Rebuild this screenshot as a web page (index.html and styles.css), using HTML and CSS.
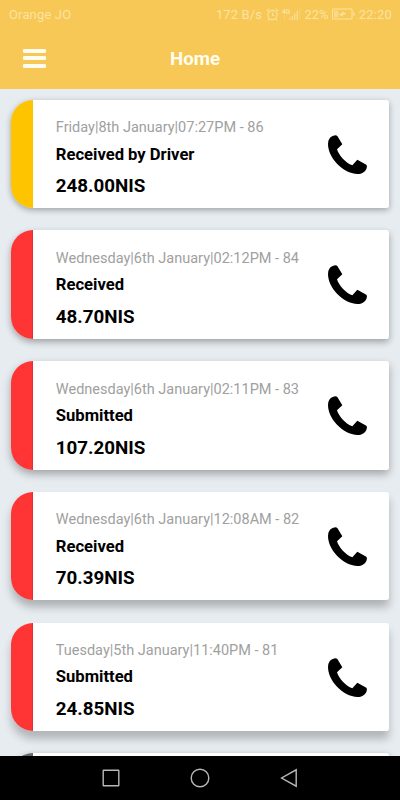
FILE: index.html
```
<!DOCTYPE html>
<html lang="en">

<head>
    <meta charset="UTF-8">
    <meta name="viewport" content="width=device-width, initial-scale=1.0">
    <title>Home</title>
    <link rel="stylesheet" href="styles.css">
</head>

<body>
    <svg class="symbols">
        <symbol id="phone" viewBox="0 0 117 117">
            <path d="M14 3Q24 -1 28 3L43 28L27 43C33 62 53 84 73 91L88 74L115 89Q118 92 116 99C112 112 101 117 89 117C43 115 0 67 0 27C0 14 6 6 14 3Z" />
        </symbol>
    </svg>

    <header>
        <div class="status">
            <span class="carrier">Orange JO</span>
            <span class="speed">172 B/s</span>
            <svg class="alarm" width="13" height="13" viewBox="0 0 13 13">
                <circle cx="6.5" cy="7" r="4.6" />
                <path d="M6.5 4.5V7.2L8.5 8M.8 3.2L3.2 1M12.2 3.2L9.8 1M3 11L2 12.3M10 11L11 12.3" />
            </svg>
            <svg class="signal" width="19" height="13" viewBox="0 0 19 13">
                <text x="0" y="5.5">4G</text>
                <path d="M7.7 12V10M10.2 12V8M12.7 12V5.5M15.2 12V3" />
                <path class="faint" d="M17.8 12V1M2.5 12V7" />
            </svg>
            <span class="percent">22%</span>
            <svg class="battery" width="23" height="12" viewBox="0 0 23 12">
                <rect x=".5" y="1" width="19.5" height="10" rx="1" />
                <rect class="level" x="2" y="2.5" width="4.5" height="7" />
                <path d="M21.8 4V8" />
                <path class="bolt" d="M6.5 6L10.5 5.3L10 3.2L14.5 6L10.5 6.7L11 8.8Z" />
            </svg>
            <span class="clock">22:20</span>
        </div>
        <div class="toolbar">
            <button class="menu" aria-label="Menu"><i></i><i></i><i></i></button>
            <h1>Home</h1>
        </div>
    </header>

    <main>
        <div class="card driver">
            <div class="info">
                <p class="date">Friday|8th January|07:27PM - 86</p>
                <p class="state">Received by Driver</p>
                <p class="price">248.00NIS</p>
            </div>
            <svg class="phone"><use href="#phone" /></svg>
        </div>
        <div class="card">
            <div class="info">
                <p class="date">Wednesday|6th January|02:12PM - 84</p>
                <p class="state">Received</p>
                <p class="price">48.70NIS</p>
            </div>
            <svg class="phone"><use href="#phone" /></svg>
        </div>
        <div class="card">
            <div class="info">
                <p class="date">Wednesday|6th January|02:11PM - 83</p>
                <p class="state">Submitted</p>
                <p class="price">107.20NIS</p>
            </div>
            <svg class="phone"><use href="#phone" /></svg>
        </div>
        <div class="card">
            <div class="info">
                <p class="date">Wednesday|6th January|12:08AM - 82</p>
                <p class="state">Received</p>
                <p class="price">70.39NIS</p>
            </div>
            <svg class="phone"><use href="#phone" /></svg>
        </div>
        <div class="card">
            <div class="info">
                <p class="date">Tuesday|5th January|11:40PM - 81</p>
                <p class="state">Submitted</p>
                <p class="price">24.85NIS</p>
            </div>
            <svg class="phone"><use href="#phone" /></svg>
        </div>
        <div class="card closed"></div>
    </main>

    <nav>
        <svg width="18" height="18" viewBox="0 0 18 18"><rect x="1.2" y="1.2" width="15.6" height="15.6" rx=".5" /></svg>
        <svg width="20" height="20" viewBox="0 0 20 20"><circle cx="10" cy="10" r="8.8" /></svg>
        <svg width="18" height="20" viewBox="0 0 18 20"><path d="M16.2 1.8V18.2L1.6 10Z" /></svg>
    </nav>
</body>

</html>
```
FILE: styles.css
```
* {
    box-sizing: border-box;
}

body {
    display: flex;
    flex-direction: column;
    height: 800px;
    margin: 0;
    overflow: hidden;
    font-family: Roboto, sans-serif;
    background-color: #e7ecf0;
}

.symbols {
    display: none;
}

header {
    flex: none;
    height: 89px;
    background-color: #f7c855;
}

.status {
    display: flex;
    align-items: center;
    height: 28px;
    padding: 0 8px 0 9px;
    color: #fbe3a3;
    font-size: 13px;
    white-space: nowrap;
}

.status svg {
    fill: none;
    stroke: #fbe3a3;
    stroke-width: 1.1;
}

.carrier {
    margin-right: auto;
    letter-spacing: 0.15px;
}

.speed {
    letter-spacing: 0.1px;
}

.alarm {
    margin-left: 4px;
}

.signal {
    margin-left: 3.5px;
}

.signal text {
    fill: #fbe3a3;
    stroke: none;
    font-size: 6.5px;
    font-weight: bold;
}

.signal .faint {
    opacity: 0.35;
}

.percent {
    margin-left: 3px;
}

.battery {
    margin-left: 3px;
}

.battery .level,
.battery .bolt {
    fill: #fbe3a3;
    stroke: none;
}

.battery .level {
    opacity: 0.6;
}

.clock {
    margin-left: 4px;
    letter-spacing: 0.2px;
}

.toolbar {
    display: grid;
    grid-template-columns: 24px 1fr 24px;
    align-items: center;
    height: 61px;
    padding: 0 32px 0 22px;
}

.menu {
    display: flex;
    flex-direction: column;
    gap: 3.5px;
    padding: 0 0 1px 1px;
    border: none;
    background: none;
}

.menu i {
    width: 23px;
    height: 4px;
    border-radius: 1px;
    background-color: #fffdf0;
}

h1 {
    margin: 0;
    color: #fffdf0;
    font-size: 18.7px;
    font-weight: bold;
    text-align: center;
}

main {
    flex: 1;
    min-height: 0;
    padding: 10.8px 11px 0;
    overflow: hidden;
}

.card {
    display: flex;
    justify-content: space-between;
    height: 108.6px;
    margin-bottom: 22.1px;
    padding: 0 22px 0 44.8px;
    border-radius: 22px 3px 3px 22px;
    background: linear-gradient(to right, #ff3434 21.3px, #c92b30 21.7px, #c92b30 22px, white 22.3px);
    box-shadow: 0 2px 6px rgba(0, 0, 0, 0.32);
}

.card.driver {
    background: linear-gradient(to right, #ffc400 22px, white 22.3px);
}

.card.closed {
    background: linear-gradient(to right, #666 22px, white 22.3px);
}

/* shadows get longer further down the list */
.card:nth-child(2) {
    box-shadow: 0 3px 7px rgba(0, 0, 0, 0.32);
}

.card:nth-child(3) {
    box-shadow: 0 4px 8px rgba(0, 0, 0, 0.31);
}

.card:nth-child(4) {
    box-shadow: 0 7px 8px rgba(0, 0, 0, 0.25);
}

.card:nth-child(5) {
    box-shadow: 0 8px 8px rgba(0, 0, 0, 0.23);
}

p {
    margin: 0;
    white-space: nowrap;
}

.date {
    margin-top: 19.5px;
    color: #a0a0a0;
    font-size: 14.5px;
    line-height: 18px;
}

.state {
    margin-top: 7.3px;
    font-size: 16.6px;
    font-weight: bold;
    line-height: 20px;
}

.price {
    margin-top: 9.8px;
    font-size: 18.8px;
    font-weight: bold;
    line-height: 24px;
}

.phone {
    flex: none;
    width: 39px;
    height: 39px;
    margin-top: 35px;
}

nav {
    display: flex;
    flex: none;
    justify-content: center;
    align-items: center;
    gap: 70px;
    height: 44px;
    background-color: black;
}

nav svg {
    fill: none;
    stroke: #b8b8b8;
    stroke-width: 1.4;
}
```
